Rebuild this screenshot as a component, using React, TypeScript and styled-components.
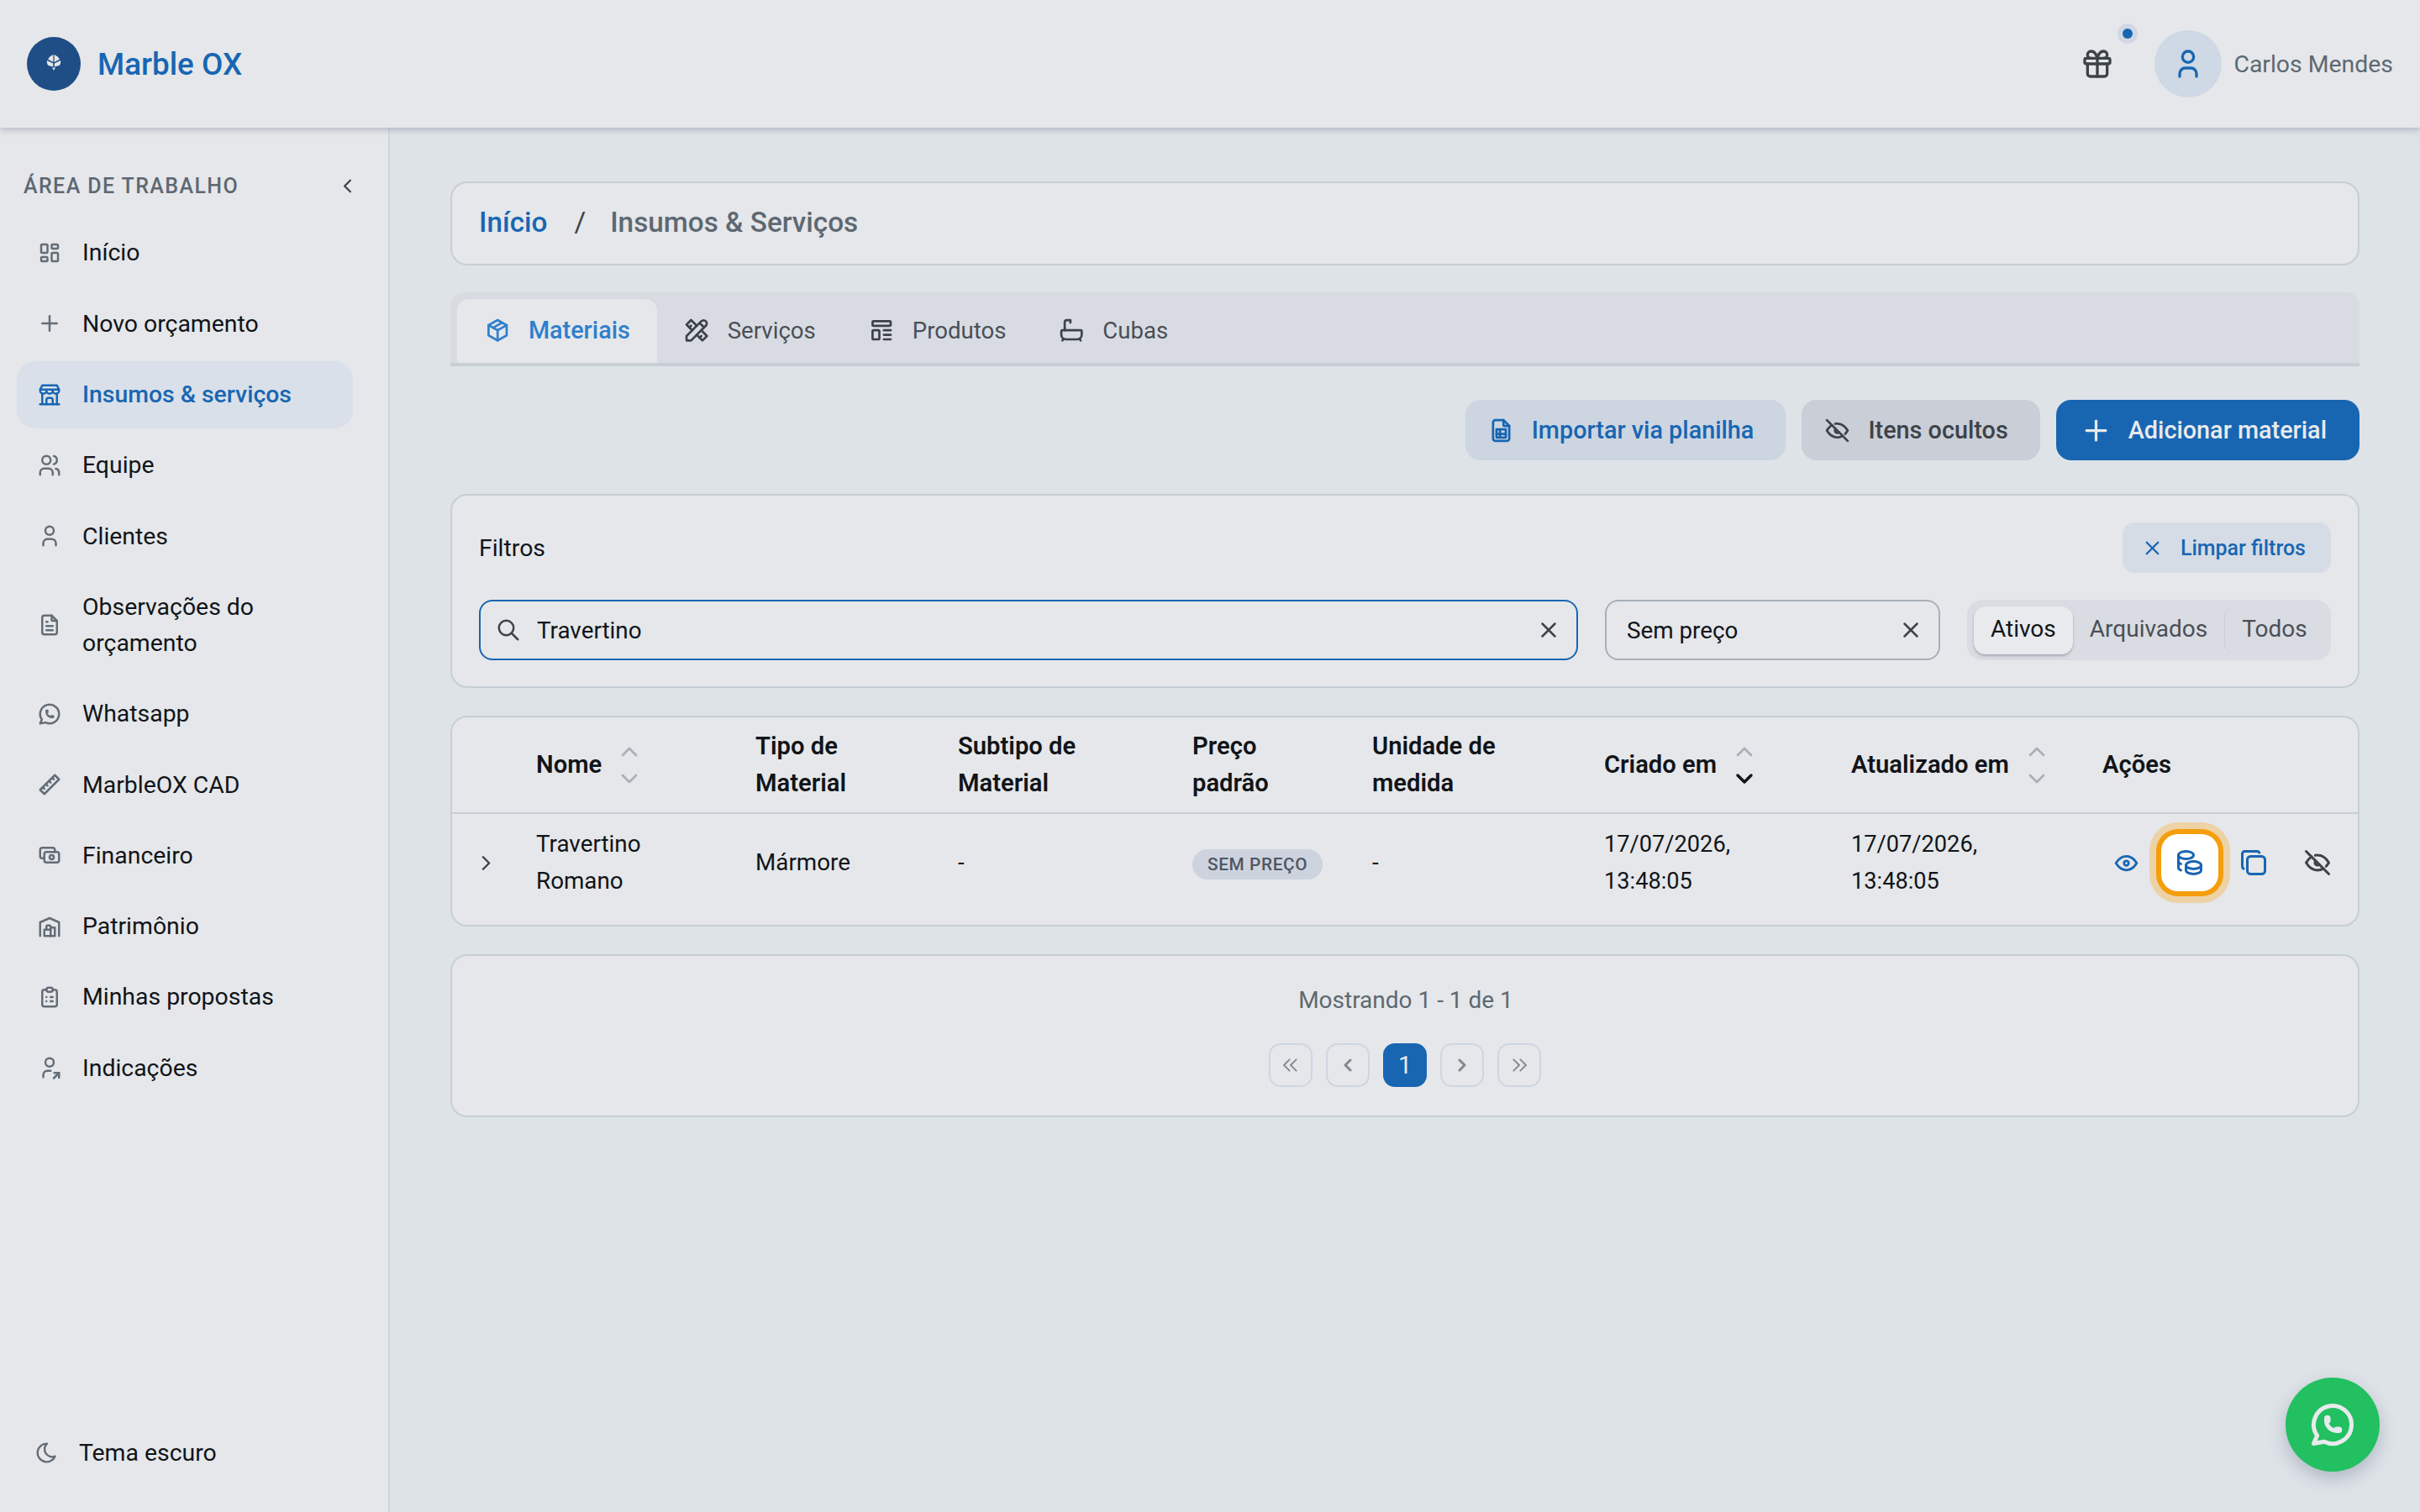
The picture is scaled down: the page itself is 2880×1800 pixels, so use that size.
import React from "react";
import styled, { createGlobalStyle } from "styled-components";
import {
  TbBath,
  TbBrandWhatsapp,
  TbBuildingStore,
  TbBuildingWarehouse,
  TbCash,
  TbChevronDown,
  TbChevronLeft,
  TbChevronRight,
  TbChevronUp,
  TbChevronsLeft,
  TbChevronsRight,
  TbClipboardList,
  TbCoins,
  TbCopy,
  TbEye,
  TbEyeOff,
  TbFileSpreadsheet,
  TbFileText,
  TbGift,
  TbLayoutDashboard,
  TbMoon,
  TbPackage,
  TbPlus,
  TbRuler2,
  TbSearch,
  TbTemplate,
  TbTools,
  TbUser,
  TbUserShare,
  TbUsers,
  TbX,
} from "react-icons/tb";

const blue = "#1866b2";

const GlobalStyle = createGlobalStyle`
  html, body {
    margin: 0;
    padding: 0;
    background: #dee3e8;
    font-family: Roboto, "Liberation Sans", sans-serif;
    color: #111418;
  }
  * { box-sizing: border-box; }
`;

const Page = styled.div`
  width: 2880px;
  height: 1800px;
  display: flex;
  flex-direction: column;
  overflow: hidden;
  position: relative;
`;

const TopBar = styled.header`
  height: 152px;
  flex: none;
  display: flex;
  align-items: center;
  justify-content: space-between;
  padding: 0 32px;
  background: #e5e7ea;
  box-shadow: 0 2px 8px rgba(120, 130, 150, 0.5);
  position: relative;
  z-index: 2;
`;

const Brand = styled.div`
  display: flex;
  align-items: center;
  gap: 20px;
`;

const LogoMark = styled.div`
  width: 64px;
  height: 64px;
  border-radius: 50%;
  background: #1e4e85;
  display: flex;
  align-items: center;
  justify-content: center;
  svg {
    margin-top: -4px;
  }
`;

const BrandName = styled.span`
  font-size: 36.8px;
  font-weight: 500;
  color: ${blue};
`;

const UserArea = styled.div`
  display: flex;
  align-items: center;
`;

const GiftButton = styled.div`
  position: relative;
  width: 40px;
  height: 40px;
  margin-right: 48px;
  color: #3d4249;
  font-size: 40px;
  display: flex;
`;

const NoticeDot = styled.span`
  position: absolute;
  left: 44px;
  top: -28px;
  width: 24px;
  height: 24px;
  border-radius: 50%;
  background: #d0d8e4;
  &::after {
    content: "";
    position: absolute;
    left: 6px;
    top: 6px;
    width: 12px;
    height: 12px;
    border-radius: 50%;
    background: ${blue};
  }
`;

const Avatar = styled.div`
  width: 80px;
  height: 80px;
  border-radius: 50%;
  background: #cfd8e5;
  color: ${blue};
  font-size: 40px;
  display: flex;
  align-items: center;
  justify-content: center;
  margin-right: 14px;
`;

const UserName = styled.span`
  font-size: 28.4px;
  color: #5e6872;
`;

const Body = styled.div`
  flex: 1;
  display: flex;
  min-height: 0;
`;

const Sidebar = styled.aside`
  width: 464px;
  flex: none;
  background: #e5e7ea;
  border-right: 2px solid #cdd6e2;
  padding: 46px 42px 46px 20px;
  display: flex;
  flex-direction: column;
`;

const SidebarHeader = styled.div`
  display: flex;
  align-items: center;
  justify-content: space-between;
  padding-left: 8px;
  height: 46px;
  margin-bottom: 17px;
  color: #5e6872;
  font-size: 25px;
  font-weight: 500;
  letter-spacing: 1.4px;
  svg {
    font-size: 27px;
    color: #3d4249;
    margin-right: -7px;
  }
`;

const NavList = styled.nav`
  display: flex;
  flex-direction: column;
  gap: 4.3px;
  flex: 1;
`;

const NavItem = styled.a<{ $active?: boolean }>`
  display: flex;
  align-items: center;
  gap: 24px;
  padding: 18.4px 24px;
  border-radius: 22px;
  font-size: 28.4px;
  line-height: 43.2px;
  font-weight: ${(p) => (p.$active ? 500 : 400)};
  color: ${(p) => (p.$active ? blue : "#111418")};
  background: ${(p) => (p.$active ? "#d9e0e9" : "transparent")};
  svg {
    flex: none;
    font-size: 30px;
    color: ${(p) => (p.$active ? blue : "#646d77")};
  }
`;

const NavLabel = styled.span`
  max-width: 260px;
`;

const ThemeToggle = styled.div`
  display: flex;
  align-items: center;
  gap: 24px;
  padding-left: 21px;
  margin-bottom: 3px;
  font-size: 28.4px;
  line-height: 43.2px;
  svg {
    font-size: 29px;
    color: #646d77;
  }
`;

const Main = styled.main`
  flex: 1;
  min-width: 0;
  padding: 64px 72px 0 72px;
  display: flex;
  flex-direction: column;
`;

const Card = styled.section`
  background: #e5e7ea;
  border: 2px solid #c8ced5;
  border-radius: 20px;
`;

const Breadcrumb = styled(Card)`
  height: 100px;
  padding: 0 32px 4px;
  display: flex;
  align-items: center;
  font-size: 33.3px;
  font-weight: 500;
`;

const CrumbLink = styled.span`
  color: ${blue};
`;

const CrumbSep = styled.span`
  margin: 0 29px 0 32px;
  color: #3d4249;
  font-weight: 400;
`;

const CrumbCurrent = styled.span`
  color: #5e6872;
`;

const TabStrip = styled.div`
  margin-top: 32px;
  height: 88px;
  background: #d8dce2;
  border-bottom: 4px solid #c8ced5;
  border-radius: 16px 16px 0 0;
  padding: 8px 8px 0;
  display: flex;
`;

const Tab = styled.div<{ $active?: boolean }>`
  height: 76px;
  padding: ${(p) => (p.$active ? "0 32px 2px" : "0 31px 2px")};
  display: flex;
  align-items: center;
  gap: 20.5px;
  font-size: ${(p) => (p.$active ? "28.8px" : "27.6px")};
  font-weight: ${(p) => (p.$active ? 500 : 400)};
  color: ${(p) => (p.$active ? "#2f7fcd" : "#4a4f57")};
  background: ${(p) => (p.$active ? "#e5e7ea" : "transparent")};
  border-radius: 14px 14px 0 0;
  svg {
    font-size: 32.4px;
    color: ${(p) => (p.$active ? "#2f7fcd" : "#3d4249")};
  }
`;

const ActionRow = styled.div`
  margin-top: 40px;
  display: flex;
  justify-content: flex-end;
  gap: 19px;
`;

const ActionButton = styled.button<{ $kind: "light" | "gray" | "solid" }>`
  height: 72px;
  border: 0;
  border-radius: 18px;
  padding: ${(p) => (p.$kind === "solid" ? "0 39px 0 28px" : "0 38px 0 26px")};
  display: flex;
  align-items: center;
  gap: ${(p) => (p.$kind === "solid" ? "19px" : "20px")};
  font: 500 28.8px Roboto, sans-serif;
  color: ${(p) => (p.$kind === "light" ? blue : p.$kind === "gray" ? "#3d4249" : "#e8eaed")};
  background: ${(p) => (p.$kind === "light" ? "#cdd5e1" : p.$kind === "gray" ? "#c9ced7" : blue)};
  svg {
    font-size: ${(p) => (p.$kind === "solid" ? "39px" : "33px")};
  }
`;

const FilterCard = styled(Card)`
  margin-top: 40px;
  height: 231px;
  padding: 32px;
`;

const FilterHead = styled.div`
  height: 60px;
  display: flex;
  align-items: center;
  justify-content: space-between;
  font-size: 28.4px;
`;

const ClearButton = styled.button`
  height: 60px;
  border: 0;
  border-radius: 14px;
  background: #d5dce6;
  color: ${blue};
  padding: 0 30px 0 22px;
  display: flex;
  align-items: center;
  gap: 20px;
  font: 500 25px Roboto, sans-serif;
  svg {
    font-size: 27px;
  }
`;

const FilterRow = styled.div`
  margin-top: 32px;
  display: flex;
  gap: 32px;
`;

const Field = styled.div<{ $focused?: boolean; $width?: string }>`
  height: 72px;
  flex: ${(p) => (p.$width ? "none" : 1)};
  width: ${(p) => p.$width ?? "auto"};
  border: 2px solid ${(p) => (p.$focused ? blue : "#a8afb8")};
  border-radius: 16px;
  display: flex;
  align-items: center;
  gap: 19px;
  padding: 0 18px 0 ${(p) => (p.$focused ? "18px" : "24px")};
  font-size: 27.8px;
  svg {
    flex: none;
    font-size: 30px;
    color: #3d4249;
  }
`;

const FieldText = styled.span`
  flex: 1;
`;

const Segmented = styled.div`
  width: 433px;
  flex: none;
  height: 72px;
  background: #d9dce2;
  border-radius: 18px;
  padding: 8px 8px;
  display: flex;
  align-items: center;
`;

const SegmentItem = styled.div<{ $active?: boolean; $divided?: boolean }>`
  height: 57px;
  display: flex;
  align-items: center;
  padding: 0 20px 4px;
  font-size: 28px;
  border-radius: 14px;
  color: ${(p) => (p.$active ? "#111418" : "#4a4f57")};
  background: ${(p) => (p.$active ? "#e8eaed" : "transparent")};
  box-shadow: ${(p) => (p.$active ? "0 2px 3px rgba(100,110,125,0.45)" : "none")};
  border-left: ${(p) => (p.$divided ? "1px solid #c8ced5" : "0")};
`;

const TableCard = styled(Card)`
  margin-top: 33px;
  height: 251px;
`;

const columns = "100px 261px 241px 279px 214px 276px 294px 299px 1fr";

const HeaderRow = styled.div`
  height: 115px;
  display: grid;
  grid-template-columns: ${columns};
  align-items: center;
  border-bottom: 2px solid #c8ced5;
  font-size: 29.2px;
  line-height: 43.2px;
  font-weight: 600;
`;

const DataRow = styled.div`
  height: 132px;
  padding-bottom: 16px;
  display: grid;
  grid-template-columns: ${columns};
  align-items: center;
  font-size: 27.8px;
  line-height: 44px;
`;

const HeadCell = styled.div<{ $narrow?: string }>`
  display: flex;
  align-items: center;
  gap: 17px;
  max-width: ${(p) => p.$narrow ?? "none"};
`;

const SortIcons = styled.span<{ $down?: boolean }>`
  display: inline-flex;
  flex-direction: column;
  font-size: 32px;
  line-height: 0;
  color: #a9afb8;
  gap: 0;
  svg:last-child {
    color: ${(p) => (p.$down ? "#111418" : "#a9afb8")};
    stroke-width: ${(p) => (p.$down ? 2.6 : 2)};
  }
`;

const ExpandCell = styled.div`
  padding-left: 26px;
  display: flex;
  font-size: 29px;
  color: #3d4249;
`;

const DateCell = styled.div`
  font-size: 27.2px;
`;

const Badge = styled.span`
  display: inline-block;
  height: 36px;
  line-height: 36px;
  padding: 0 18px;
  border-radius: 18px;
  background: #cdd3de;
  color: #4f5660;
  font-size: 20.8px;
  font-weight: 500;
  letter-spacing: 0.6px;
`;

const ActionsCell = styled.div`
  display: flex;
  align-items: center;
  margin-left: 12px;
`;

const IconAction = styled.span<{ $tone: "blue" | "dark"; $left: number; $size: number }>`
  display: flex;
  margin-left: ${(p) => p.$left}px;
  font-size: ${(p) => p.$size}px;
  color: ${(p) => (p.$tone === "blue" ? blue : "#3d4249")};
`;

const FocusedAction = styled.span`
  width: 68px;
  height: 68px;
  margin-left: 25px;
  border-radius: 20px;
  background: #fff;
  color: ${blue};
  font-size: 36px;
  display: flex;
  align-items: center;
  justify-content: center;
  box-shadow: 0 0 0 6px #f59e0b, 0 0 0 14px #edd2a5;
`;

const PagerCard = styled(Card)`
  margin-top: 33px;
  height: 194px;
  display: flex;
  flex-direction: column;
  align-items: center;
  padding-top: 31px;
`;

const PagerText = styled.div`
  font-size: 28px;
  line-height: 44px;
  color: #5e6872;
  margin-left: 2px;
`;

const PagerButtons = styled.div`
  margin-top: 29px;
  display: flex;
  gap: 16px;
`;

const PageButton = styled.span<{ $active?: boolean; $double?: boolean }>`
  width: 52px;
  height: 52px;
  border-radius: 14px;
  border: 2px solid ${(p) => (p.$active ? blue : "#ced6e1")};
  background: ${(p) => (p.$active ? blue : "transparent")};
  color: ${(p) => (p.$active ? "#e8eaed" : "#85888e")};
  display: flex;
  align-items: center;
  justify-content: center;
  font-size: 28.8px;
  svg {
    font-size: ${(p) => (p.$double ? "32px" : "24px")};
    stroke-width: ${(p) => (p.$double ? 1.4 : 3)};
  }
`;

const WhatsappFab = styled.div`
  position: absolute;
  left: 2720px;
  top: 1640px;
  width: 112px;
  height: 112px;
  border-radius: 50%;
  background: #22c060;
  color: #e8eaed;
  font-size: 60px;
  display: flex;
  align-items: center;
  justify-content: center;
  box-shadow: 0 8px 20px rgba(120, 130, 150, 0.45);
`;

const LogoIcon = () => (
  <svg width="18" height="21" viewBox="0 0 18 21" fill="#e5e7ea">
    <path d="M8.4 1C6 2 3.5 4 2 6.5L8.4 10Z" />
    <path d="M9.6 1C12 2 14.5 4 16 6.5L9.6 10Z" />
    <path d="M1 8C.5 10 1 12.5 2.5 14L8.2 15.5V11.5Z" />
    <path d="M17 8C17.5 10 17 12.5 15.5 14L9.8 15.5V11.5Z" />
    <path d="M7 16.5H11L9 20Z" />
  </svg>
);

const navItems = [
  { label: "Início", icon: <TbLayoutDashboard /> },
  { label: "Novo orçamento", icon: <TbPlus /> },
  { label: "Insumos & serviços", icon: <TbBuildingStore />, active: true },
  { label: "Equipe", icon: <TbUsers /> },
  { label: "Clientes", icon: <TbUser /> },
  { label: "Observações do orçamento", icon: <TbFileText /> },
  { label: "Whatsapp", icon: <TbBrandWhatsapp /> },
  { label: "MarbleOX CAD", icon: <TbRuler2 /> },
  { label: "Financeiro", icon: <TbCash /> },
  { label: "Patrimônio", icon: <TbBuildingWarehouse /> },
  { label: "Minhas propostas", icon: <TbClipboardList /> },
  { label: "Indicações", icon: <TbUserShare /> },
];

const tabs = [
  { label: "Materiais", icon: <TbPackage />, active: true },
  { label: "Serviços", icon: <TbTools /> },
  { label: "Produtos", icon: <TbTemplate /> },
  { label: "Cubas", icon: <TbBath /> },
];

const Sort = ({ down }: { down?: boolean }) => (
  <SortIcons $down={down}>
    <TbChevronUp />
    <TbChevronDown />
  </SortIcons>
);

const App: React.FC = () => {
  return (
    <Page>
      <GlobalStyle />
      <TopBar>
        <Brand>
          <LogoMark>
            <LogoIcon />
          </LogoMark>
          <BrandName>Marble OX</BrandName>
        </Brand>
        <UserArea>
          <GiftButton>
            <TbGift />
            <NoticeDot />
          </GiftButton>
          <Avatar>
            <TbUser />
          </Avatar>
          <UserName>Carlos Mendes</UserName>
        </UserArea>
      </TopBar>
      <Body>
        <Sidebar>
          <SidebarHeader>
            ÁREA DE TRABALHO
            <TbChevronLeft />
          </SidebarHeader>
          <NavList>
            {navItems.map((item) => (
              <NavItem key={item.label} $active={item.active}>
                {item.icon}
                <NavLabel>{item.label}</NavLabel>
              </NavItem>
            ))}
          </NavList>
          <ThemeToggle>
            <TbMoon />
            Tema escuro
          </ThemeToggle>
        </Sidebar>
        <Main>
          <Breadcrumb>
            <CrumbLink>Início</CrumbLink>
            <CrumbSep>/</CrumbSep>
            <CrumbCurrent>Insumos &amp; Serviços</CrumbCurrent>
          </Breadcrumb>
          <TabStrip>
            {tabs.map((tab) => (
              <Tab key={tab.label} $active={tab.active}>
                {tab.icon}
                {tab.label}
              </Tab>
            ))}
          </TabStrip>
          <ActionRow>
            <ActionButton $kind="light">
              <TbFileSpreadsheet />
              Importar via planilha
            </ActionButton>
            <ActionButton $kind="gray">
              <TbEyeOff />
              Itens ocultos
            </ActionButton>
            <ActionButton $kind="solid">
              <TbPlus />
              Adicionar material
            </ActionButton>
          </ActionRow>
          <FilterCard>
            <FilterHead>
              Filtros
              <ClearButton>
                <TbX />
                Limpar filtros
              </ClearButton>
            </FilterHead>
            <FilterRow>
              <Field $focused>
                <TbSearch />
                <FieldText>Travertino</FieldText>
                <TbX />
              </Field>
              <Field $width="399px">
                <FieldText>Sem preço</FieldText>
                <TbX />
              </Field>
              <Segmented>
                <SegmentItem $active>Ativos</SegmentItem>
                <SegmentItem>Arquivados</SegmentItem>
                <SegmentItem $divided>Todos</SegmentItem>
              </Segmented>
            </FilterRow>
          </FilterCard>
          <TableCard>
            <HeaderRow>
              <span />
              <HeadCell>
                Nome
                <Sort />
              </HeadCell>
              <HeadCell $narrow="170px">Tipo de Material</HeadCell>
              <HeadCell $narrow="170px">Subtipo de Material</HeadCell>
              <HeadCell $narrow="120px">Preço padrão</HeadCell>
              <HeadCell $narrow="180px">Unidade de medida</HeadCell>
              <HeadCell>
                Criado em
                <Sort down />
              </HeadCell>
              <HeadCell>
                Atualizado em
                <Sort />
              </HeadCell>
              <HeadCell>Ações</HeadCell>
            </HeaderRow>
            <DataRow>
              <ExpandCell>
                <TbChevronRight />
              </ExpandCell>
              <div>
                Travertino
                <br />
                Romano
              </div>
              <div>Mármore</div>
              <div>-</div>
              <div>
                <Badge>SEM PREÇO</Badge>
              </div>
              <div>-</div>
              <DateCell>
                17/07/2026,
                <br />
                13:48:05
              </DateCell>
              <DateCell>
                17/07/2026,
                <br />
                13:48:05
              </DateCell>
              <ActionsCell>
                <IconAction $tone="blue" $left={0} $size={33}>
                  <TbEye />
                </IconAction>
                <FocusedAction>
                  <TbCoins />
                </FocusedAction>
                <IconAction $tone="blue" $left={24} $size={36}>
                  <TbCopy />
                </IconAction>
                <IconAction $tone="dark" $left={40} $size={36}>
                  <TbEyeOff />
                </IconAction>
              </ActionsCell>
            </DataRow>
          </TableCard>
          <PagerCard>
            <PagerText>Mostrando 1 - 1 de 1</PagerText>
            <PagerButtons>
              <PageButton $double>
                <TbChevronsLeft />
              </PageButton>
              <PageButton>
                <TbChevronLeft />
              </PageButton>
              <PageButton $active>1</PageButton>
              <PageButton>
                <TbChevronRight />
              </PageButton>
              <PageButton $double>
                <TbChevronsRight />
              </PageButton>
            </PagerButtons>
          </PagerCard>
        </Main>
      </Body>
      <WhatsappFab>
        <TbBrandWhatsapp />
      </WhatsappFab>
    </Page>
  );
};

export default App;
